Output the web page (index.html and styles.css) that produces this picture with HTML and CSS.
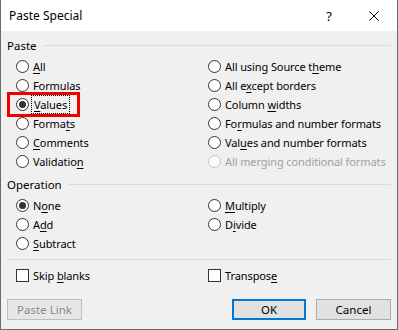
FILE: index.html
```html
<!DOCTYPE html>
<html lang="en">
<head>
<meta charset="utf-8">
<title>Paste Special</title>
<link rel="stylesheet" href="styles.css">
</head>
<body>
<div class="dialog">
  <div class="titlebar">
    <span class="title">Paste Special</span>
    <span class="help">?</span>
    <span class="close"><svg width="10" height="10" viewBox="0 0 10 10"><path d="M0.5 0.5 L9.5 9.5 M9.5 0.5 L0.5 9.5" stroke="#000" stroke-width="1" fill="none"/></svg></span>
  </div>
  <div class="content">
    <div class="group-head"><span class="group-label">Paste</span><span class="group-line"></span></div>
    <div class="grid paste-grid">
      <div class="col">
        <label class="opt"><span class="radio"></span><span class="txt"><u>A</u>ll</span></label>
        <label class="opt"><span class="radio"></span><span class="txt"><u>F</u>ormulas</span></label>
        <label class="opt"><span class="radio checked"></span><span class="txt focus"><u>V</u>alues</span></label>
        <label class="opt"><span class="radio"></span><span class="txt">Forma<u>t</u>s</span></label>
        <label class="opt"><span class="radio"></span><span class="txt"><u>C</u>omments</span></label>
        <label class="opt"><span class="radio"></span><span class="txt">Validatio<u>n</u></span></label>
      </div>
      <div class="col">
        <label class="opt"><span class="radio"></span><span class="txt">All using Source t<u>h</u>eme</span></label>
        <label class="opt"><span class="radio"></span><span class="txt">All e<u>x</u>cept borders</span></label>
        <label class="opt"><span class="radio"></span><span class="txt">Column <u>w</u>idths</span></label>
        <label class="opt"><span class="radio"></span><span class="txt">Fo<u>r</u>mulas and number formats</span></label>
        <label class="opt"><span class="radio"></span><span class="txt">Val<u>u</u>es and number formats</span></label>
        <label class="opt disabled"><span class="radio"></span><span class="txt">All merging conditional formats</span></label>
      </div>
    </div>
    <div class="group-head op-head"><span class="group-label">Operation</span><span class="group-line"></span></div>
    <div class="grid op-grid">
      <div class="col">
        <label class="opt"><span class="radio checked"></span><span class="txt">N<u>o</u>ne</span></label>
        <label class="opt"><span class="radio"></span><span class="txt">A<u>d</u>d</span></label>
        <label class="opt"><span class="radio"></span><span class="txt"><u>S</u>ubtract</span></label>
      </div>
      <div class="col">
        <label class="opt"><span class="radio"></span><span class="txt"><u>M</u>ultiply</span></label>
        <label class="opt"><span class="radio"></span><span class="txt">D<u>i</u>vide</span></label>
      </div>
    </div>
    <div class="sep"></div>
    <div class="grid check-grid">
      <label class="opt"><span class="check"></span><span class="txt">Skip <u>b</u>lanks</span></label>
      <label class="opt"><span class="check"></span><span class="txt">Transpos<u>e</u></span></label>
    </div>
    <div class="buttons">
      <button class="btn disabled-btn">Paste Link</button>
      <span class="spacer"></span>
      <button class="btn default-btn">OK</button>
      <button class="btn">Cancel</button>
    </div>
  </div>
  <div class="highlight"></div>
</div>
</body>
</html>
```
FILE: styles.css
```css
* { box-sizing: border-box; }
html, body { margin: 0; padding: 0; background: #f0f0f0; }
body { font-family: "Noto Sans", "Open Sans", sans-serif; font-size: 11px; color: #000; }

.dialog {
  position: relative;
  width: 398px;
  height: 330px;
  background: #f0f0f0;
  border-left: 1px solid #6b6b6b;
  border-right: 1px solid #6b6b6b;
  border-bottom: 1px solid #6b6b6b;
}

.titlebar {
  height: 31px;
  background: #fff;
  display: flex;
  align-items: center;
  padding-left: 8px;
}
.title { flex: 1; font-size: 12px; }
.help { width: 12px; text-align: center; font-size: 13px; margin-right: 34px; }
.close { width: 10px; height: 10px; margin-right: 18px; display: flex; }

.content { padding: 0 6px; }

.group-head {
  display: flex;
  align-items: center;
  height: 16px;
  margin-top: 6px;
}
.group-label { padding-right: 6px; font-size: 11.5px; }
.group-line { flex: 1; border-top: 1px solid #dcdcdc; margin-top: 0; }

.grid {
  display: grid;
  grid-template-columns: 192px 1fr;
  padding-left: 9px;
}
.paste-grid { margin-top: 4px; }
.op-head { margin-top: 5px; }
.op-grid { margin-top: 4px; }

.col { display: flex; flex-direction: column; }

.opt {
  display: flex;
  align-items: center;
  height: 19px;
  gap: 4px;
  white-space: nowrap;
}
.txt { letter-spacing: -0.1px; }
.opt u { text-decoration: underline; text-underline-offset: 2px; }

.radio {
  width: 13px;
  height: 13px;
  border: 1px solid #333;
  border-radius: 50%;
  background: #fff;
  position: relative;
  flex: none;
}
.radio.checked::after {
  content: "";
  position: absolute;
  left: 2px;
  top: 2px;
  width: 7px;
  height: 7px;
  border-radius: 50%;
  background: #333;
}
.disabled .radio { border-color: #c4c4c4; background: #fafafa; }
.disabled .txt { color: #a0a0a0; }

.focus { outline: 1px dotted #000; outline-offset: 1px; padding: 0 1px; }

.check {
  width: 13px;
  height: 13px;
  border: 1px solid #333;
  background: #fff;
  flex: none;
}

.sep { border-top: 1px solid #dcdcdc; margin-top: 6px; }
.check-grid { margin-top: 6px; }

.buttons {
  display: flex;
  margin-top: 14px;
  gap: 10px;
}
.spacer { flex: 1; }
.btn {
  width: 75px;
  height: 21px;
  font-family: inherit;
  font-size: 11.5px;
  background: #e1e1e1;
  border: 1px solid #adadad;
  color: #000;
  padding: 0;
}
.disabled-btn { color: #8a8a8a; border-color: #bfbfbf; background: #e6e6e6; }
.default-btn { border: 2px solid #0078d7; width: 74px; }

.highlight {
  position: absolute;
  left: 6px;
  top: 92px;
  width: 73px;
  height: 25px;
  border: 3px solid #ee0000;
}
```
